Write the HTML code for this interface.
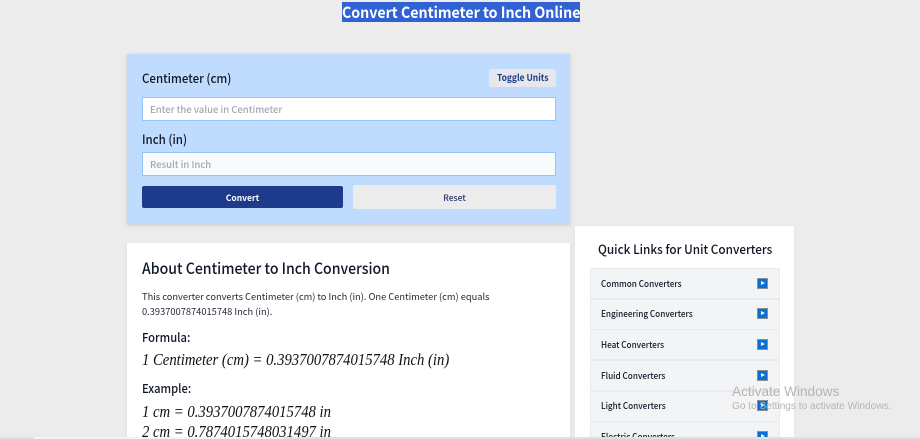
<!DOCTYPE html>
<html lang="en"><head><meta charset="utf-8"><title>Convert Centimeter to Inch Online</title>
<style>
html,body{margin:0;padding:0;width:920px;height:439px;overflow:hidden;background:#ececec}
body{position:relative;font-family:"Noto Sans CJK SC","Liberation Sans",sans-serif;color:#111827}
.a{position:absolute;white-space:nowrap}
.box{position:absolute;box-sizing:border-box}
.t{position:absolute;white-space:nowrap;line-height:1}
.sx{transform:scaleX(.92);transform-origin:0 0}
.link{position:absolute;left:590px;width:190px;height:31px;box-sizing:border-box;background:#f3f4f6;border:1px solid #e9eaed}
.link span{position:absolute;left:10px;top:7.5px;font-size:9px;line-height:13px;font-weight:500;color:#111827;white-space:nowrap;transform:scaleX(.91);transform-origin:0 0}
.ic{position:absolute;left:167px;top:9.5px;width:9px;height:9px;background:#0a6fd0;box-shadow:0 0 0 1px #8a8f96}
.ic:after{content:"";position:absolute;left:3px;top:2px;border-left:4px solid #fff;border-top:2.5px solid transparent;border-bottom:2.5px solid transparent}
.i{font-family:"Liberation Serif",serif;font-style:italic;font-size:16.5px;color:#111;line-height:1;transform:scaleX(.89);transform-origin:0 0}
</style></head><body>
<div class="a" style="left:342px;top:2px;width:238px;height:20px;background:#3162d4"></div>
<div class="t" style="left:342px;top:5px;color:#fff;font-size:15.2px;font-weight:700;transform:scaleX(.934);transform-origin:0 0">Convert Centimeter to Inch Online</div>

<div class="box" style="left:127px;top:54px;width:443px;height:170px;background:#bfdbfe;box-shadow:0 1px 4px rgba(0,0,0,.15)"></div>
<div class="t sx" style="left:142px;top:72px;font-size:12.5px;font-weight:500;color:#111827">Centimeter (cm)</div>
<div class="box" style="left:489px;top:69px;width:67px;height:18px;background:#e5e7eb;border-radius:3px"></div>
<div class="t" style="left:497px;top:73px;color:#1e3a8a;font-size:9.2px;font-weight:700;transform:scaleX(.92);transform-origin:0 0">Toggle Units</div>
<div class="box" style="left:142px;top:97px;width:414px;height:24px;background:#fff;border:1px solid #93c5fd;color:#a3a7af;font-size:9.5px;font-weight:500;line-height:22px;padding-left:7px">Enter the value in Centimeter</div>
<div class="t sx" style="left:142px;top:133px;font-size:12.5px;font-weight:500;color:#111827">Inch (in)</div>
<div class="box" style="left:142px;top:152px;width:414px;height:24px;background:#f9fafb;border:1px solid #93c5fd;color:#a3a7af;font-size:9.5px;font-weight:500;line-height:22px;padding-left:7px">Result in Inch</div>
<div class="box" style="left:142px;top:186px;width:201px;height:22px;background:#1e3a8a;border-radius:2px;color:#fff;font-size:8.5px;font-weight:700;line-height:24px;text-align:center">Convert</div>
<div class="box" style="left:353px;top:185px;width:203px;height:24px;background:#ececec;border-radius:2px;color:#1f2f5f;font-size:8.5px;font-weight:500;line-height:26px;text-align:center">Reset</div>

<div class="box" style="left:127px;top:243px;width:443px;height:196px;background:#fff;box-shadow:0 1px 4px rgba(0,0,0,.08)"></div>
<div class="t sx" style="left:142px;top:261px;font-size:15.3px;font-weight:500;color:#111827">About Centimeter to Inch Conversion</div>
<div class="t" style="left:142px;top:292px;font-size:9.3px;color:#1f2937">This converter converts Centimeter (cm) to Inch (in). One Centimeter (cm) equals</div>
<div class="t" style="left:142px;top:307px;font-size:9.3px;color:#1f2937">0.3937007874015748 Inch (in).</div>
<div class="t sx" style="left:142px;top:331px;font-size:12.2px;font-weight:500;color:#111827">Formula:</div>
<div class="t i" style="left:142px;top:352px">1 Centimeter (cm) = 0.3937007874015748 Inch (in)</div>
<div class="t sx" style="left:142px;top:382px;font-size:12.2px;font-weight:500;color:#111827">Example:</div>
<div class="t i" style="left:142px;top:404px">1 cm = 0.3937007874015748 in</div>
<div class="t i" style="left:142px;top:424px">2 cm = 0.7874015748031497 in</div>

<div class="box" style="left:575px;top:226px;width:219px;height:213px;background:#fff;box-shadow:0 1px 4px rgba(0,0,0,.05)"></div>
<div class="t sx" style="left:598px;top:243px;font-size:12.8px;font-weight:500;color:#111827">Quick Links for Unit Converters</div>
<div class="link" style="top:268px"><span>Common Converters</span><i class="ic"></i></div>
<div class="link" style="top:298.5px"><span>Engineering Converters</span><i class="ic"></i></div>
<div class="link" style="top:329px"><span>Heat Converters</span><i class="ic"></i></div>
<div class="link" style="top:360px"><span>Fluid Converters</span><i class="ic"></i></div>
<div class="link" style="top:390.5px"><span>Light Converters</span><i class="ic"></i></div>
<div class="link" style="top:421px"><span>Electric Converters</span><i class="ic"></i></div>

<div class="t" style="left:732px;top:385px;font-size:13.6px;color:#b4b4b4;font-family:'Liberation Sans',sans-serif">Activate Windows</div>
<div class="t" style="left:732px;top:402px;font-size:10.1px;color:#b4b4b4;font-family:'Liberation Sans',sans-serif">Go to Settings to activate Windows.</div>

<div class="box" style="left:0;top:437px;width:920px;height:2px;background:#dfe0e4"></div>
<div class="box" style="left:34px;top:437px;width:250px;height:2px;background:#f4f4f6"></div>
</body></html>
